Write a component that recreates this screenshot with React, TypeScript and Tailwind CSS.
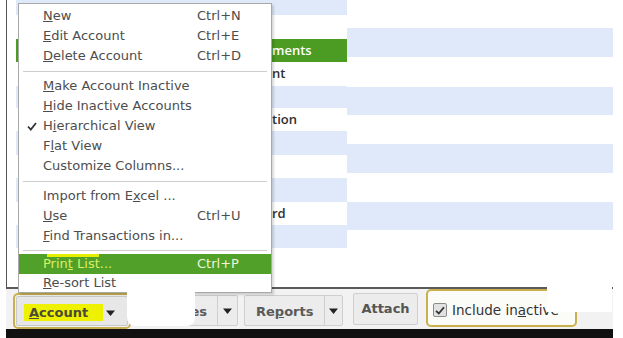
import React from "react";

const Tri = () => (
  <svg width="9" height="6" viewBox="0 0 9 6" className="block">
    <path d="M0 0.5H9L4.5 6Z" fill="#222" />
  </svg>
);

type MenuItem =
  | { kind: "item"; label: React.ReactNode; sc?: string; check?: boolean; active?: boolean; h?: string }
  | { kind: "sep"; h: string };

const items: MenuItem[] = [
  { kind: "item", label: <><u>N</u>ew</>, sc: "Ctrl+N" },
  { kind: "item", label: <><u>E</u>dit Account</>, sc: "Ctrl+E" },
  { kind: "item", label: <><u>D</u>elete Account</>, sc: "Ctrl+D" },
  { kind: "sep", h: "h-[10px]" },
  { kind: "item", label: <><u>M</u>ake Account Inactive</> },
  { kind: "item", label: <><u>H</u>ide Inactive Accounts</> },
  { kind: "item", label: <>H<u>i</u>erarchical View</>, check: true },
  { kind: "item", label: <>F<u>l</u>at View</> },
  { kind: "item", label: <>Customize Columns...</> },
  { kind: "sep", h: "h-[10px]" },
  { kind: "item", label: <>Import from E<u>x</u>cel ...</> },
  { kind: "item", label: <><u>U</u>se</>, sc: "Ctrl+U" },
  { kind: "item", label: <><u>F</u>ind Transactions in...</> },
  { kind: "sep", h: "h-[8px]" },
  { kind: "item", label: <>Prin<u>t</u> List...</>, sc: "Ctrl+P", active: true },
  { kind: "item", label: <><u>R</u>e-sort List</>, h: "h-[18px]" },
];

const leftRows: { h: string; bg: string; text?: string; green?: boolean }[] = [
  { h: "h-[15px]", bg: "bg-[#dfe9f9]" },
  { h: "h-[24px]", bg: "bg-white" },
  { h: "h-[23px]", bg: "bg-[#4c9b22]", text: "ments", green: true },
  { h: "h-[24px]", bg: "bg-white", text: "nt" },
  { h: "h-[22px]", bg: "bg-[#dfe9f9]" },
  { h: "h-[23px]", bg: "bg-white", text: "tion" },
  { h: "h-[24px]", bg: "bg-[#dfe9f9]" },
  { h: "h-[23px]", bg: "bg-white" },
  { h: "h-[24px]", bg: "bg-[#dfe9f9]" },
  { h: "h-[23px]", bg: "bg-white", text: "rd" },
  { h: "h-[23px]", bg: "bg-[#dfe9f9]" },
];

const rightRows: { h: string; bg: string }[] = [
  { h: "h-[28px]", bg: "bg-white" },
  { h: "h-[29px]", bg: "bg-[#dfe9f9]" },
  { h: "h-[30px]", bg: "bg-white" },
  { h: "h-[28px]", bg: "bg-[#dfe9f9]" },
  { h: "h-[29px]", bg: "bg-white" },
  { h: "h-[29px]", bg: "bg-[#dfe9f9]" },
  { h: "h-[29px]", bg: "bg-white" },
  { h: "h-[28px]", bg: "bg-[#dfe9f9]" },
];

export default function App() {
  return (
    <div
      className="relative w-[623px] h-[338px] overflow-hidden bg-white"
      style={{ fontFamily: '"DejaVu Sans", Verdana, sans-serif' }}
    >
      <div className="flex flex-col h-full">
        {/* list area */}
        <div className="flex ml-[6px] w-[607px] h-[289px] border-b-2 border-[#5a5a5a]">
          <div className="w-[341px] border-l border-[#555] flex flex-col pl-[9px]">
            {leftRows.map((r, i) => (
              <div
                key={i}
                className={`${r.h} ${r.bg} flex items-center pl-[256px] text-[13px] font-semibold ${
                  r.green ? "text-white font-normal" : "text-[#2f2f2f]"
                }`}
                style={{ fontFamily: '"Open Sans", sans-serif' }}
              >
                {r.text}
              </div>
            ))}
            <div className="flex-1 bg-white" />
          </div>
          <div className="flex-1 flex flex-col">
            {rightRows.map((r, i) => (
              <div key={i} className={`${r.h} ${r.bg}`} />
            ))}
            <div className="flex-1 bg-white" />
          </div>
        </div>

        {/* bottom button bar */}
        <div className="ml-[6px] w-[607px] h-[40px] bg-[#f2f2f2] flex items-start text-[13px]">
          <div className="ml-[7px] mt-[4px] w-[118px] h-[36px] border-2 border-[#c8b050] rounded-[5px] p-[1px] flex">
            <div className="flex-1 flex items-center pt-[3px] bg-[#e7e7e7] border border-[#c9c9c9] rounded-[2px]">
              <span className="ml-[7px] bg-[#eef200] pl-[5px] pr-[15px] h-[17px] leading-[17px] font-bold text-[#4a4a35]">
                <u>A</u>ccount
              </span>
              <span className="ml-[3px]">
                <Tri />
              </span>
            </div>
          </div>

          <div className="ml-[2px] mt-[6px] w-[105px] h-[31px] flex bg-[#ececec] border border-[#cfcfcf] rounded-[2px] font-bold text-[#5a5a5a]">
            <div className="w-[84px] flex items-center justify-end pr-[10px] pt-[2px] border-r border-[#cfcfcf]">Activities</div>
            <div className="flex-1 flex items-center justify-center">
              <Tri />
            </div>
          </div>

          <div className="ml-[6px] mt-[6px] w-[99px] h-[31px] flex bg-[#ececec] border border-[#cfcfcf] rounded-[2px] font-bold text-[#5a5a5a]">
            <div className="w-[80px] flex items-center pl-[11px] pt-[2px] border-r border-[#cfcfcf]">
              Re<u>p</u>orts
            </div>
            <div className="flex-1 flex items-center justify-center">
              <Tri />
            </div>
          </div>

          <div className="ml-[10px] mt-[4px] w-[65px] h-[32px] flex items-center justify-center bg-[#ececec] border border-[#cfcfcf] rounded-[2px] font-bold text-[#555]">
            Attach
          </div>

          <div className="ml-[8px] mt-0 w-[151px] h-[38px] border-2 border-[#c8b050] rounded-[5px] bg-[#fbfbf8] flex items-center pl-[5px] pt-[4px]">
            <div className="w-[14px] h-[14px] border border-[#8c8c8c] rounded-[2px] bg-[#e2e2e2] flex items-center justify-center">
              <svg width="10" height="9" viewBox="0 0 10 9">
                <path d="M1 4.8 L3.8 7.5 L9 1.2" fill="none" stroke="#333" strokeWidth="1.8" />
              </svg>
            </div>
            <span className="ml-[5px] text-[13.5px] text-[#333]">
              Include in<u>a</u>ctive
            </span>
          </div>
        </div>

        <div className="ml-[6px] w-[607px] h-[9px] bg-[#111]" />
      </div>

      {/* dropdown menu */}
      <div className="absolute left-[18px] top-[3px] w-[254px] bg-white border border-[#a8a8a8] pt-[2px] shadow-[2px_2px_2px_rgba(0,0,0,0.15)] text-[13px] text-[#4d4d4d]">
        {items.map((it, i) =>
          it.kind === "sep" ? (
            <div key={i} className={`${it.h} flex items-center px-[4px]`}>
              <div className="h-px w-full bg-[#cdcdcd]" />
            </div>
          ) : (
            <div
              key={i}
              className={`relative ${it.h ?? "h-[20px]"} flex items-center ${
                it.active ? "bg-[#51a02a]" : ""
              }`}
            >
              <div className="w-[24px] flex justify-center pl-[2px]">
                {it.check && (
                  <svg width="10" height="9" viewBox="0 0 10 9">
                    <path d="M1 4.5 L3.8 7.6 L9 1" fill="none" stroke="#333" strokeWidth="1.8" />
                  </svg>
                )}
              </div>
              <div className={`w-[154px] whitespace-nowrap ${it.active ? "text-[#d9f060]" : ""}`}>{it.label}</div>
              <div className={`whitespace-nowrap ${it.active ? "text-[#eef5dc]" : ""}`}>{it.sc}</div>
              {it.active && <div className="absolute left-[28px] top-0 w-[52px] h-[3px] bg-[#e4f000]" />}
            </div>
          )
        )}
      </div>

      {/* redaction overlays */}
      <div className="absolute left-[127px] top-[274px] w-[68px] h-[52px] bg-white rounded-[8px]" />
      <div className="absolute left-[547px] top-[258px] w-[65px] h-[54px] bg-white" />
    </div>
  );
}
